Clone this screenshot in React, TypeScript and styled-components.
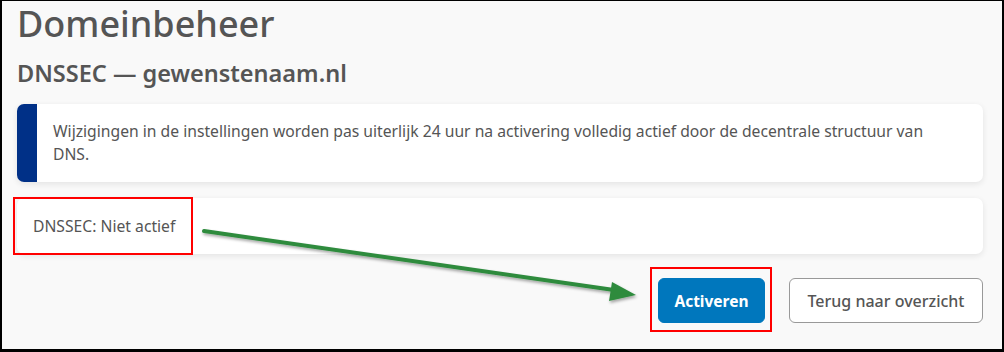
import styled, { createGlobalStyle } from "styled-components";

const GlobalStyle = createGlobalStyle`
  html, body {
    margin: 0;
    padding: 0;
    background: #000;
  }
  * {
    box-sizing: border-box;
  }
`;

const Frame = styled.div`
  position: relative;
  width: 1004px;
  height: 352px;
  border-style: solid;
  border-color: #000;
  border-width: 1px 2px 3px 2px;
  background: #f9f9f9;
  padding: 2px 19px 0 15px;
  font-family: "Noto Sans", "Open Sans", sans-serif;
  color: #555555;
  overflow: hidden;
`;

const Title = styled.h1`
  margin: 0;
  font-size: 36px;
  font-weight: 500;
  line-height: 42px;
  color: #555555;
`;

const Subtitle = styled.h2`
  margin: 13px 0 0;
  font-size: 23.5px;
  font-weight: 600;
  line-height: 30px;
  color: #555555;
`;

const Card = styled.div`
  background: #fff;
  border-radius: 7px;
  box-shadow: 0 2px 6px rgba(0, 0, 0, 0.09);
  font-size: 15.7px;
  line-height: 23px;
  overflow: hidden;
  display: flex;
`;

const Accent = styled.div`
  width: 20px;
  flex: none;
  background: #003087;
`;

const CardBody = styled.div<{ $wide?: boolean }>`
  padding: ${(p) => (p.$wide ? "16px 30px 16px 16px" : "17px 16px 16px 16px")};
`;

const Stack = styled.div`
  display: flex;
  flex-direction: column;
  gap: 16px;
  margin-top: 16px;
`;

const Actions = styled.div`
  display: flex;
  justify-content: flex-end;
  gap: 24px;
  margin-top: 24px;
`;

const Button = styled.button<{ $primary?: boolean }>`
  height: 45px;
  padding: 0 12px;
  border-radius: 6px;
  font-family: inherit;
  cursor: pointer;
  ${(p) =>
    p.$primary
      ? `
    background: #0077bd;
    color: #fff;
    border: 1px solid #0077bd;
    font-size: 15.5px;
    font-weight: 700;
    width: 107px;
  `
      : `
    background: #fff;
    color: #555555;
    border: 1px solid #999;
    font-size: 16px;
    font-weight: 500;
    width: 194px;
  `}
`;

const Highlight = styled.div`
  position: absolute;
  border: 2px solid #ff0000;
  pointer-events: none;
`;

const ArrowSvg = styled.svg`
  position: absolute;
  left: 0;
  top: 0;
  pointer-events: none;
  overflow: visible;
`;

export default function App() {
  return (
    <>
      <GlobalStyle />
      <Frame>
        <Title>Domeinbeheer</Title>
        <Subtitle>DNSSEC — gewenstenaam.nl</Subtitle>
        <Stack>
          <Card>
            <Accent />
            <CardBody $wide>
              Wijzigingen in de instellingen worden pas uiterlijk 24 uur na activering volledig actief
              door de decentrale structuur van DNS.
            </CardBody>
          </Card>
          <Card>
            <CardBody>DNSSEC: Niet actief</CardBody>
          </Card>
        </Stack>
        <Actions>
          <Button $primary>Activeren</Button>
          <Button>Terug naar overzicht</Button>
        </Actions>

        <Highlight style={{ left: 11, top: 196, width: 180, height: 58 }} />
        <Highlight style={{ left: 648, top: 266, width: 122, height: 65 }} />
        <ArrowSvg width="1004" height="352">
          <defs>
            <filter id="shadow" x="-10%" y="-50%" width="120%" height="200%">
              <feDropShadow dx="1" dy="2" stdDeviation="1.5" floodColor="#000" floodOpacity="0.35" />
            </filter>
          </defs>
          <g filter="url(#shadow)" transform="translate(-2,-1)">
            <line x1="204" y1="231" x2="614" y2="290" stroke="#2e8b3e" strokeWidth="4" strokeLinecap="round" />
            <polygon points="636,295 612,282 609,301" fill="#2e8b3e" />
          </g>
        </ArrowSvg>
      </Frame>
    </>
  );
}
